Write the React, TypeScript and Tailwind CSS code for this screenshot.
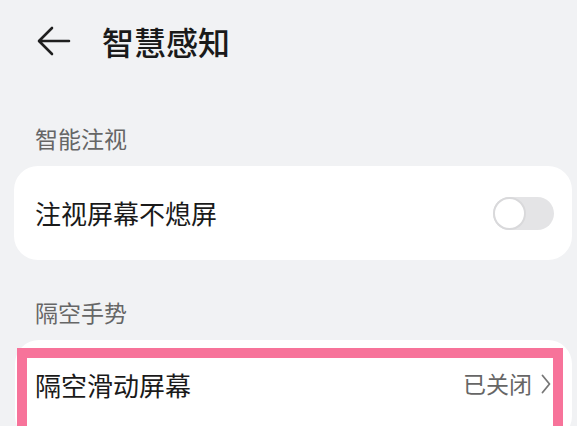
const font = { fontFamily: '"Noto Sans CJK SC", "Noto Sans", sans-serif' };

function Toggle() {
  return (
    <div className="relative h-[33px] w-[61px] rounded-full bg-[#e4e4e6]">
      <div className="absolute left-0 top-0 h-[33px] w-[33px] rounded-full border-2 border-[#d9d9db] bg-white" />
    </div>
  );
}

export default function App() {
  return (
    <div className="h-[426px] w-[577px] overflow-hidden bg-[#f1f2f4] text-[#1a1a1a]" style={font}>
      <header className="flex h-[82px] items-center">
        <svg className="ml-[37px]" width="34" height="32" viewBox="0 0 34 32" fill="none">
          <path d="M32 16H3M15 3 2 16l13 13" stroke="#1f1f1f" strokeWidth="2.6" strokeLinecap="round" strokeLinejoin="round" />
        </svg>
        <h1 className="ml-[31px] text-[32px] font-medium leading-none">智慧感知</h1>
      </header>

      <div className="mt-[45px] pl-[35px] text-[23px] leading-[22px] text-[#666]">智能注视</div>
      <section className="mx-[14px] mt-[17px] flex h-[94px] w-[558px] items-center justify-between rounded-[24px] bg-white pl-[21px] pr-[18px]">
        <span className="text-[26px] leading-none">注视屏幕不熄屏</span>
        <Toggle />
      </section>

      <div className="mt-[41px] pl-[35px] text-[23px] leading-[22px] text-[#666]">隔空手势</div>
      <section className="relative ml-[15px] mt-[17px] flex h-[100px] w-[557px] items-start justify-between rounded-[24px] bg-white pl-[20px] pr-[21px] pt-[32px]">
        <span className="text-[26px] leading-none">隔空滑动屏幕</span>
        <span className="flex items-center gap-[9px] text-[23px] leading-none text-[#666]">
          已关闭
          <svg width="10" height="20" viewBox="0 0 10 20" fill="none">
            <path d="M1.5 1.5 8.5 10l-7 8.5" stroke="#777" strokeWidth="1.8" strokeLinecap="round" strokeLinejoin="round" />
          </svg>
        </span>
        <div className="absolute left-[2px] top-[8px] h-[120px] w-[546px] border-[10px] border-[#f7739a]" />
      </section>
    </div>
  );
}
